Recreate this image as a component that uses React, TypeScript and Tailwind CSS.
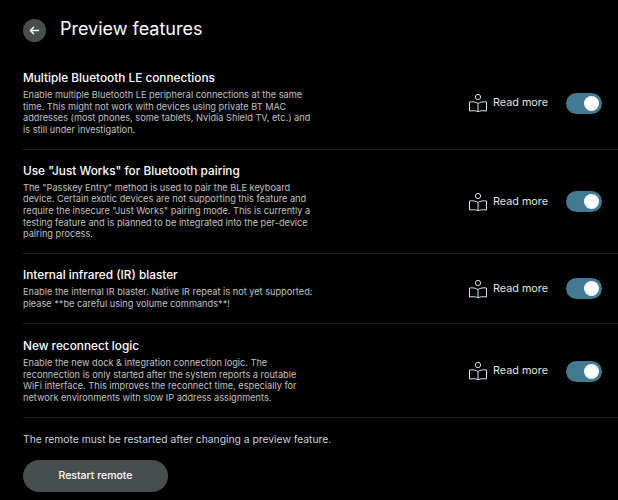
const features = [
  {
    title: 'Multiple Bluetooth LE connections',
    lines: [
      'Enable multiple Bluetooth LE peripheral connections at the same',
      'time. This might not work with devices using private BT MAC',
      'addresses (most phones, some tablets, Nvidia Shield TV, etc.) and',
      'is still under investigation.',
    ],
  },
  {
    title: 'Use "Just Works" for Bluetooth pairing',
    lines: [
      'The "Passkey Entry" method is used to pair the BLE keyboard',
      'device. Certain exotic devices are not supporting this feature and',
      'require the insecure "Just Works" pairing mode. This is currently a',
      'testing feature and is planned to be integrated into the per-device',
      'pairing process.',
    ],
  },
  {
    title: 'Internal infrared (IR) blaster',
    lines: [
      'Enable the internal IR blaster. Native IR repeat is not yet supported:',
      'please **be careful using volume commands**!',
    ],
  },
  {
    title: 'New reconnect logic',
    lines: [
      'Enable the new dock & integration connection logic. The',
      'reconnection is only started after the system reports a routable',
      'WiFi interface. This improves the reconnect time, especially for',
      'network environments with slow IP address assignments.',
    ],
  },
]

function ReadIcon() {
  return (
    <svg width="20" height="20" viewBox="0 0 20 20" fill="none" stroke="#cfe6f5" strokeWidth="1" className="shrink-0">
      <circle cx="10" cy="4" r="2.600" />
      <path d="M10 10.500C8 9 4.500 8.500 1.500 9v9c3.500-.5 6.500-.3 8.500.7 2-1 5-1.200 8.500-.7V9c-3-.5-6.500 0-8.500 1.500z" />
      <path d="M10 10.500v8" />
    </svg>
  )
}

export default function App() {
  return (
    <div className="w-[618px] h-[500px] overflow-hidden bg-black font-['Inter',sans-serif] text-white pl-[23px]">
      <div className="flex items-center gap-[14px] pt-[3px] h-[57px]">
        <button className="w-[23px] h-[23px] rounded-full bg-[#484d4d] flex items-center justify-center">
          <svg width="11" height="11" viewBox="0 0 12 12" fill="none" stroke="white" strokeWidth="1.500" strokeLinecap="round" strokeLinejoin="round">
            <path d="M10.500 6h-9M5 2.500 1.500 6 5 9.500" />
          </svg>
        </button>
        <h1 className="text-[18px] leading-[20px] -mt-[2px]">Preview features</h1>
      </div>

      <div>
        {features.map((f) => (
          <div key={f.title} className="flex items-center border-b border-[#1f1f1f] pt-[14px] last:pt-[15px] pb-[13.500px]">
            <div className="w-[445px]">
              <h2 className="text-[11.800px] leading-[14px] font-medium mb-[4px]">{f.title}</h2>
              {f.lines.map((l) => (
                <p key={l} className="text-[9.200px] leading-[11.600px] text-[#c0c0c0] whitespace-nowrap">{l}</p>
              ))}
            </div>
            <div className="flex items-center">
              <ReadIcon />
              <span className="ml-[5px] w-[73px] text-[10.800px] text-[#e2e2e2]">Read more</span>
              <div className="w-[36px] h-[21px] rounded-full bg-[#427a92] flex items-center justify-end pr-[3px]">
                <div className="w-[15px] h-[15px] rounded-full bg-white" />
              </div>
            </div>
          </div>
        ))}
      </div>

      <p className="mt-[14px] text-[10.300px] leading-[14px] text-[#c8d2da]">The remote must be restarted after changing a preview feature.</p>
      <button className="mt-[14px] w-[145px] h-[32px] rounded-full bg-[#484d4d] text-[10.500px] font-medium">Restart remote</button>
    </div>
  )
}
